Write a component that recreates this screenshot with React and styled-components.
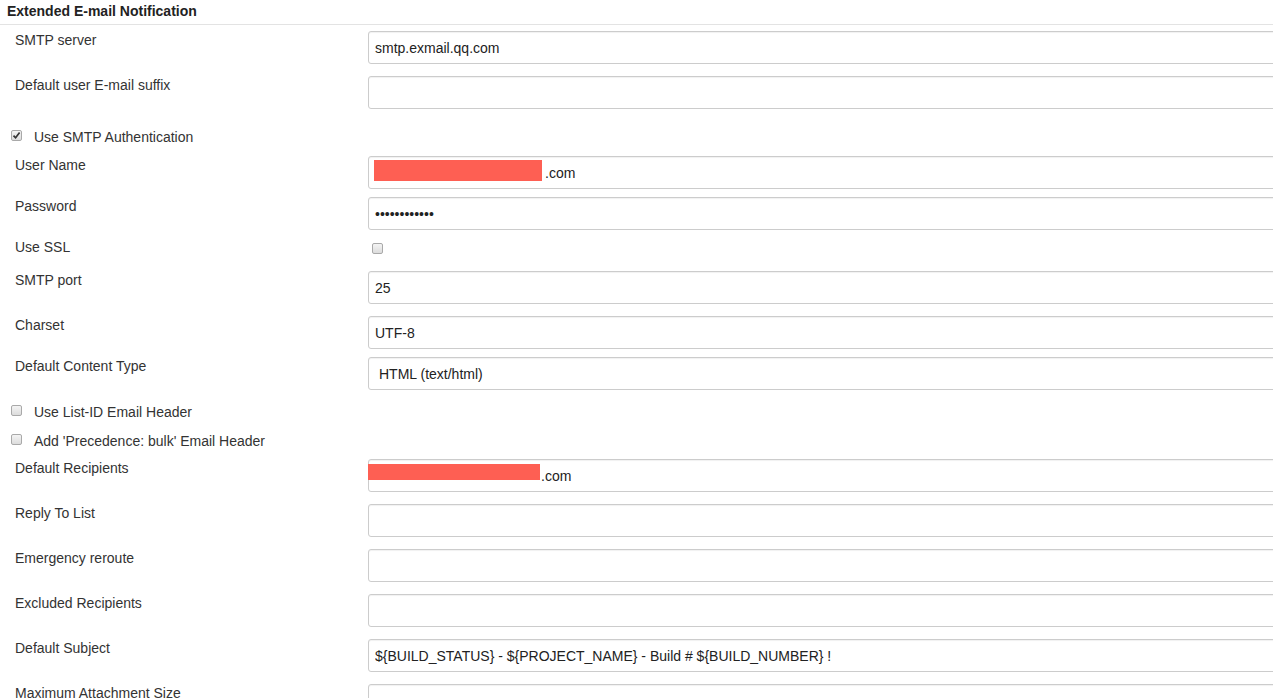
import React from "react";
import styled, { createGlobalStyle } from "styled-components";

const GlobalStyle = createGlobalStyle`
  html, body {
    margin: 0;
    padding: 0;
    background: #fff;
    overflow: hidden;
  }
  body {
    font-family: "Liberation Sans", Arial, sans-serif;
    font-size: 14px;
    color: #333;
  }
`;

const Page = styled.div`
  width: 1290px;
`;

const SectionHeader = styled.div`
  height: 25px;
  box-sizing: border-box;
  padding: 3px 0 0 7px;
  border-bottom: 1px solid #e3e3e3;
  font-size: 14px;
  font-weight: bold;
  line-height: 16px;
  color: #222;
  margin-bottom: 6px;
`;

const Row = styled.div`
  display: grid;
  grid-template-columns: 368px 1fr;
  height: ${({ h }) => h}px;
`;

const Label = styled.div`
  padding: 1px 0 0 15px;
  line-height: 16px;
  color: #333;
`;

const FieldWrap = styled.div`
  position: relative;
`;

const TextInput = styled.input`
  display: block;
  width: 100%;
  height: 33px;
  box-sizing: border-box;
  border: 1px solid #ccc;
  border-radius: 3px;
  box-shadow: inset 0 1px 1px rgba(0, 0, 0, 0.06);
  padding: 0 0 0 ${({ pad }) => pad || 6}px;
  font-family: "Liberation Sans", Arial, sans-serif;
  font-size: 14px;
  color: #222;
  background: #fff;
  outline: none;
`;

const Select = styled.select`
  display: block;
  width: 100%;
  height: 33px;
  box-sizing: border-box;
  border: 1px solid #ccc;
  border-radius: 3px;
  box-shadow: inset 0 1px 1px rgba(0, 0, 0, 0.06);
  padding: 0 0 0 10px;
  font-family: "Liberation Sans", Arial, sans-serif;
  font-size: 14px;
  color: #222;
  background: #fff;
  appearance: none;
  outline: none;
`;

const Redact = styled.div`
  position: absolute;
  background: #fe5f53;
  left: ${({ x }) => x}px;
  top: ${({ y }) => y}px;
  width: ${({ w }) => w}px;
  height: ${({ hh }) => hh}px;
`;

const CheckRow = styled.div`
  display: flex;
  align-items: flex-start;
  gap: 12px;
  height: ${({ h }) => h}px;
  box-sizing: border-box;
  padding: ${({ top }) => top}px 0 0 11px;
  line-height: 16px;
  color: #333;
`;

const Box = styled.span`
  display: inline-flex;
  align-items: center;
  justify-content: center;
  width: 11px;
  height: 11px;
  margin-top: ${({ mt }) => mt || 1}px;
  box-sizing: border-box;
  border: 1px solid #a9a9a9;
  border-radius: 2px;
  background: linear-gradient(#f4f4f4, #dcdcdc);
`;

const BoxCell = styled.div`
  padding: 3px 0 0 4px;
`;

const Check = ({ checked, mt }) => (
  <Box mt={mt}>
    {checked && (
      <svg width="9" height="9" viewBox="0 0 9 9">
        <path d="M1.5 4.6 L3.6 6.8 L7.6 1.6" fill="none" stroke="#333" strokeWidth="1.7" />
      </svg>
    )}
  </Box>
);

const Field = ({ label, value, h = 45, pad, redact }) => (
  <Row h={h}>
    <Label>{label}</Label>
    <FieldWrap>
      <TextInput readOnly value={value} pad={pad} />
      {redact && <Redact {...redact} />}
    </FieldWrap>
  </Row>
);

export default function App() {
  return (
    <Page>
      <GlobalStyle />
      <SectionHeader>Extended E-mail Notification</SectionHeader>
      <Field label="SMTP server" value="smtp.exmail.qq.com" />
      <Field label="Default user E-mail suffix" value="" />
      <CheckRow h={35} top={8}>
        <Check checked mt={0} />
        <span>Use SMTP Authentication</span>
      </CheckRow>
      <Field
        label="User Name"
        value=".com"
        h={41}
        pad={176}
        redact={{ x: 6, y: 4, w: 168, hh: 21 }}
      />
      <Row h={41}>
        <Label>Password</Label>
        <FieldWrap>
          <TextInput type="password" readOnly value="qwertyuiop12" />
        </FieldWrap>
      </Row>
      <Row h={33}>
        <Label>Use SSL</Label>
        <BoxCell>
          <Check mt={0} />
        </BoxCell>
      </Row>
      <Field label="SMTP port" value="25" />
      <Field label="Charset" value="UTF-8" h={41} />
      <Row h={41}>
        <Label>Default Content Type</Label>
        <FieldWrap>
          <Select defaultValue="html">
            <option value="html">HTML (text/html)</option>
            <option value="text">Plain Text (text/plain)</option>
          </Select>
        </FieldWrap>
      </Row>
      <CheckRow h={29} top={6}>
        <Check />
        <span>Use List-ID Email Header</span>
      </CheckRow>
      <CheckRow h={32} top={6}>
        <Check />
        <span>Add 'Precedence: bulk' Email Header</span>
      </CheckRow>
      <Field
        label="Default Recipients"
        value=".com"
        pad={172}
        redact={{ x: 0, y: 5, w: 172, hh: 16 }}
      />
      <Field label="Reply To List" value="" />
      <Field label="Emergency reroute" value="" />
      <Field label="Excluded Recipients" value="" />
      <Field
        label="Default Subject"
        value="${BUILD_STATUS} - ${PROJECT_NAME} - Build # ${BUILD_NUMBER} !"
      />
      <Field label="Maximum Attachment Size" value="" />
    </Page>
  );
}
